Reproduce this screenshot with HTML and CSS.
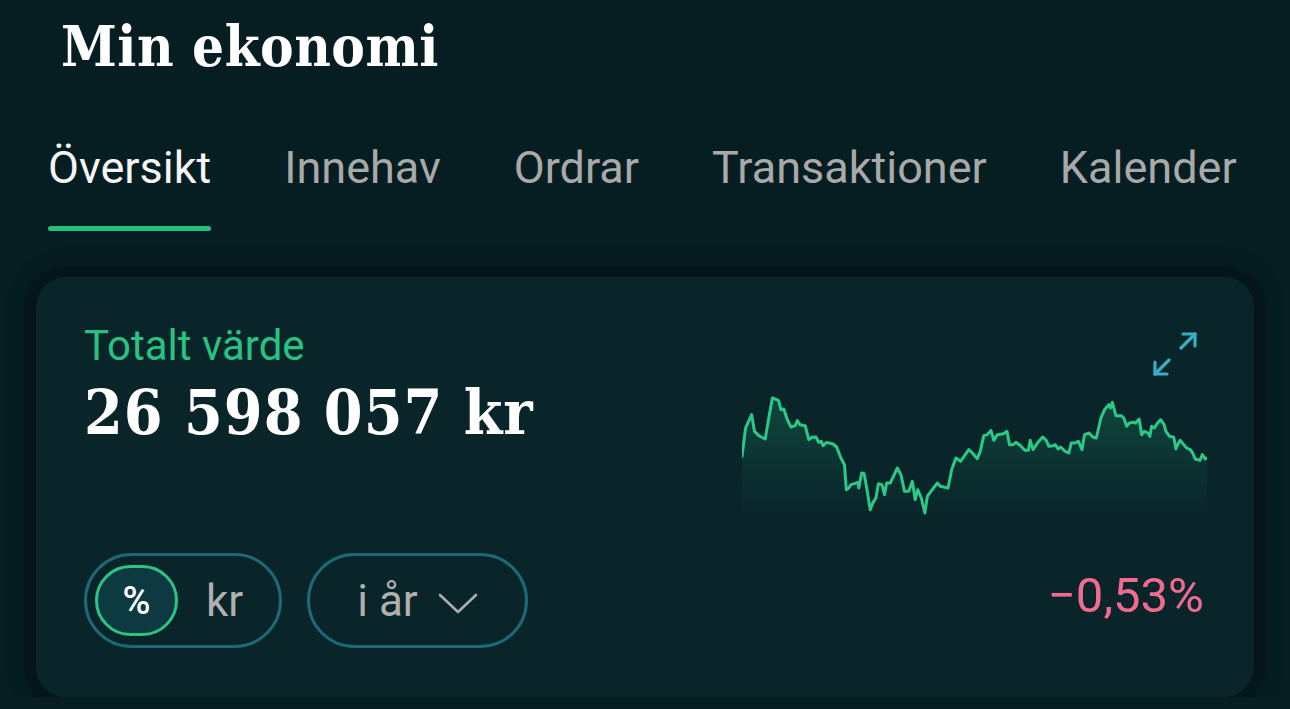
FILE: index.html
```html
<!DOCTYPE html>
<html lang="sv">
<head>
    <meta charset="UTF-8">
    <meta name="viewport" content="width=device-width, initial-scale=1.0">
    <title>Min ekonomi</title>
    <link rel="stylesheet" href="styles.css">
</head>
<body>
    <div class="page">
        <h1 class="title">Min ekonomi</h1>

        <nav class="tabs">
            <a class="tab active">Översikt</a>
            <a class="tab">Innehav</a>
            <a class="tab">Ordrar</a>
            <a class="tab">Transaktioner</a>
            <a class="tab">Kalender</a>
        </nav>

        <section class="card">
            <div class="summary">
                <div class="label">Totalt värde</div>
                <div class="amount">26 598 057 kr</div>

                <div class="controls">
                    <div class="unit-toggle">
                        <span class="unit selected">%</span>
                        <span class="unit">kr</span>
                    </div>
                    <button class="period">
                        <span>i år</span>
                        <svg class="chevron" viewBox="0 0 40 22" width="40" height="22">
                            <polyline points="2,3 20,20 38,3" fill="none" stroke="#acacac" stroke-width="2.6" stroke-linecap="round" stroke-linejoin="round"/>
                        </svg>
                    </button>
                </div>
            </div>

            <div class="trend">
                <svg class="expand" viewBox="0 0 46 45" width="46" height="45">
                    <g fill="none" stroke="#38aec6" stroke-width="3.2" stroke-linecap="round" stroke-linejoin="round">
                        <polyline points="31,2 43,2 43,14"/>
                        <line x1="43" y1="2" x2="29" y2="16"/>
                        <polyline points="3,30 3,42 15,42"/>
                        <line x1="3" y1="42" x2="17" y2="28"/>
                    </g>
                </svg>

                <svg class="chart" viewBox="113 250 1302 369" preserveAspectRatio="none" width="465" height="123">
                    <defs>
                        <linearGradient id="area" x1="0" y1="0" x2="0" y2="1">
                            <stop offset="0" stop-color="#27c283" stop-opacity="0.22"/>
                            <stop offset="0.55" stop-color="#27c283" stop-opacity="0.08"/>
                            <stop offset="1" stop-color="#27c283" stop-opacity="0"/>
                        </linearGradient>
                    </defs>
                    <path id="area-fill" fill="url(#area)" d=""/>
                    <polyline id="line" fill="none" stroke="#2bc886" stroke-width="3" stroke-linejoin="round" stroke-linecap="round" vector-effect="non-scaling-stroke" points=""/>
                </svg>

                <div class="change">−0,53%</div>
            </div>
        </section>
    </div>

    <script>
        // rough price history, traced by hand
        const pts = [
            [113,440],[123,355],[140,315],[148,365],[160,378],[178,388],[188,325],[198,265],[215,272],
            [222,300],[230,298],[240,330],[250,352],[262,348],[268,333],[275,345],[290,348],[300,390],
            [308,383],[320,382],[328,398],[335,395],[340,408],[350,398],[368,403],[378,412],[390,445],
            [400,465],[405,540],[412,535],[418,525],[428,522],[438,518],[440,535],[448,490],[455,492],
            [463,540],[472,600],[480,578],[488,565],[495,522],[505,525],[512,555],[518,520],[528,520],
            [538,498],[548,475],[558,495],[568,545],[580,545],[590,515],[598,570],[605,540],[615,565],
            [625,610],[632,560],[642,545],[660,520],[668,530],[690,535],[700,480],[712,445],[725,455],
            [738,435],[748,420],[758,430],[772,447],[780,425],[790,378],[800,375],[810,362],[818,392],
            [828,375],[845,372],[855,365],[862,405],[872,405],[880,398],[893,408],[905,422],[915,422],
            [920,392],[928,420],[940,400],[955,382],[965,392],[972,410],[985,408],[990,405],[998,418],
            [1005,412],[1018,425],[1028,430],[1035,400],[1045,400],[1055,395],[1065,420],[1072,375],
            [1085,370],[1095,382],[1105,385],[1118,325],[1128,300],[1140,285],[1145,295],[1150,278],
            [1160,318],[1175,318],[1182,325],[1190,350],[1198,340],[1208,338],[1215,340],[1225,328],
            [1232,375],[1240,365],[1250,370],[1255,380],[1260,350],[1268,355],[1275,342],[1285,330],
            [1295,345],[1300,365],[1310,380],[1322,383],[1328,418],[1335,400],[1340,392],[1350,405],
            [1358,415],[1368,420],[1375,430],[1382,448],[1395,452],[1402,435],[1410,448],[1415,445]
        ];

        const line = pts.map(p => p.join(',')).join(' ');
        document.getElementById('line').setAttribute('points', line);
        document.getElementById('area-fill').setAttribute('d',
            'M' + pts.map(p => p.join(',')).join(' L') + ' L1415,619 L113,619 Z');
    </script>
</body>
</html>
```

FILE: styles.css
```css
body {
    margin: 0;
    background-color: #061d21;
    font-family: Roboto, "Noto Sans", sans-serif;
    color: #f4f4f4;
    overflow: hidden;
}

.page {
    padding: 0 36px 0 36px;
}

.title {
    margin: 0;
    padding: 18px 0 0 25px;
    font-family: "DejaVu Serif Condensed", "DejaVu Serif", serif;
    font-stretch: condensed;
    font-size: 56px;
    line-height: 1;
    font-weight: bold;
    letter-spacing: 0.5px;
    color: #ffffff;
}

.tabs {
    display: flex;
    gap: 73px;
    margin-top: 71px;
    padding-left: 12px;
}

.tab {
    display: flex;
    flex-direction: column;
    gap: 36px;
    font-size: 45px;
    line-height: 1;
    color: #a9a9a9;
    white-space: nowrap;
}

.tab::after {
    content: "";
    display: block;
    height: 5px;
    border-radius: 3px;
    background: transparent;
}

.tab.active {
    color: #f5f5f5;
}

.tab.active::after {
    background: #21c27f;
}

.card {
    display: flex;
    justify-content: space-between;
    box-sizing: border-box;
    height: 420px;
    margin-top: 46px;
    padding: 48px 47px 49px 48px;
    border-radius: 30px;
    background-color: #09252a;
    box-shadow: 0 0 0 12px rgba(0, 0, 0, 0.13), 0 0 20px 14px rgba(0, 0, 0, 0.1);
}

.summary {
    display: flex;
    flex-direction: column;
}

.label {
    font-size: 42px;
    line-height: 1;
    color: #28c282;
}

.amount {
    margin-top: 15px;
    font-family: "DejaVu Serif Condensed", "DejaVu Serif", serif;
    font-stretch: condensed;
    font-size: 62px;
    line-height: 1;
    font-weight: bold;
    letter-spacing: 1px;
    color: #ffffff;
    white-space: nowrap;
}

.controls {
    display: flex;
    gap: 25px;
    margin-top: auto;
}

.unit-toggle {
    display: flex;
    align-items: center;
    box-sizing: border-box;
    width: 198px;
    height: 95px;
    padding: 0 8px;
    border: 3px solid #1c6a76;
    border-radius: 48px;
}

.unit {
    flex: 1;
    text-align: center;
    font-size: 44px;
    color: #b0b0b0;
}

.unit.selected {
    flex: none;
    display: flex;
    align-items: center;
    justify-content: center;
    box-sizing: border-box;
    width: 83px;
    height: 71px;
    border: 3px solid #2bc484;
    border-radius: 36px;
    background-color: #0c3a40;
    font-size: 38px;
    font-weight: 500;
    color: #ffffff;
}

.period {
    display: flex;
    align-items: center;
    justify-content: center;
    gap: 20px;
    box-sizing: border-box;
    width: 221px;
    height: 95px;
    padding: 0;
    border: 3px solid #1c6a76;
    border-radius: 48px;
    background: none;
    font-family: Roboto, "Noto Sans", sans-serif;
    font-size: 44px;
    color: #b0b0b0;
}

.chevron {
    margin-top: 4px;
}

.trend {
    display: flex;
    flex-direction: column;
    align-items: flex-end;
}

.expand {
    margin: 7px 9px 0 0;
}

.chart {
    display: block;
    margin-top: 16px;
}

.change {
    margin: 55px 3px 0 0;
    font-size: 49px;
    line-height: 1;
    color: #f26a8f;
}
```
